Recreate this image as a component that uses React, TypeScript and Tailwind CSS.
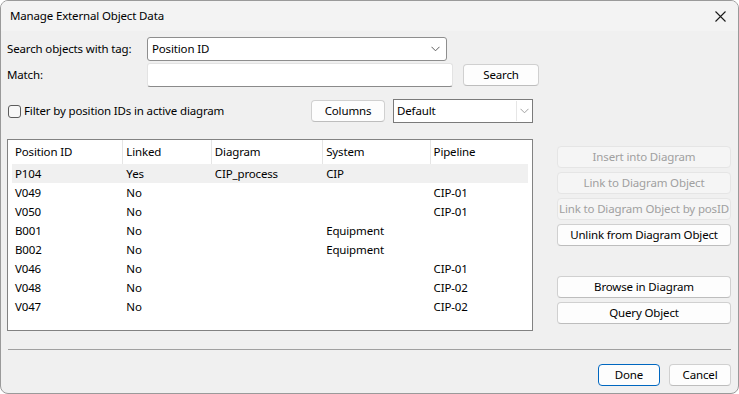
import React from "react";

const rows = [
  ["P104", "Yes", "CIP_process", "CIP", ""],
  ["V049", "No", "", "", "CIP-01"],
  ["V050", "No", "", "", "CIP-01"],
  ["B001", "No", "", "Equipment", ""],
  ["B002", "No", "", "Equipment", ""],
  ["V046", "No", "", "", "CIP-01"],
  ["V048", "No", "", "", "CIP-02"],
  ["V047", "No", "", "", "CIP-02"],
];

const cols = [
  { name: "Position ID", w: "w-[112px]" },
  { name: "Linked", w: "w-[89px]" },
  { name: "Diagram", w: "w-[112px]" },
  { name: "System", w: "w-[108px]" },
  { name: "Pipeline", w: "w-[98px]" },
];

function Chevron({ color = "#5f5f5f" }: { color?: string }) {
  return (
    <svg width="9" height="6" viewBox="0 0 9 6" fill="none">
      <path d="M0.5 0.8 L4.5 4.8 L8.5 0.8" stroke={color} strokeWidth="1" />
    </svg>
  );
}

function Btn({ children, w, disabled, primary }: { children: React.ReactNode; w: string; disabled?: boolean; primary?: boolean }) {
  return (
    <div
      className={`${w} h-[22px] flex items-center justify-center rounded-[4px] border whitespace-nowrap ${
        disabled
          ? "bg-[#f5f5f5] border-[#e5e5e5] text-[#a0a0a0]"
          : primary
          ? "bg-[#fdfdfd] border-[#0067c0] text-black"
          : "bg-[#fdfdfd] border-[#d0d0d0] border-b-[#bdbdbd] text-black"
      }`}
    >
      {children}
    </div>
  );
}

export default function App() {
  return (
    <div
      className="w-[739px] h-[394px] overflow-hidden rounded-[8px] border border-[#9a9a9a] bg-[#f0f0f0] text-[11.5px] tracking-[-0.15px] text-black flex flex-col"
      style={{ fontFamily: '"Noto Sans", "Open Sans", sans-serif' }}
    >
      {/* Title bar */}
      <div className="h-[30px] shrink-0 bg-[#f3f3f3] flex items-center justify-between pl-[9px] pr-[12px]">
        <span className="leading-none">Manage External Object Data</span>
        <svg width="11" height="11" viewBox="0 0 11 11">
          <path d="M0.5 0.5 L10.5 10.5 M10.5 0.5 L0.5 10.5" stroke="#1a1a1a" strokeWidth="1.1" />
        </svg>
      </div>

      {/* Body */}
      <div className="flex-1 flex flex-col pl-[6px] pr-[7px]">
        {/* Row 1 */}
        <div className="flex items-center mt-[6px] h-[24px]">
          <span className="w-[140px]">Search objects with tag:</span>
          <div className="w-[300px] h-[24px] bg-white border border-[#8e8e8e] rounded-[3px] flex items-center justify-between pl-[4px] pr-[6px]">
            <span>Position ID</span>
            <Chevron />
          </div>
        </div>
        {/* Row 2 */}
        <div className="flex items-center mt-[2px] h-[24px]">
          <span className="w-[140px]">Match:</span>
          <div className="w-[306px] h-[24px] bg-white border border-[#e3e3e3] border-b-[#8a8a8a] rounded-[3px]" />
          <div className="ml-[10px]">
            <Btn w="w-[76px]">Search</Btn>
          </div>
        </div>
        {/* Row 3 */}
        <div className="flex items-center mt-[12px] h-[24px]">
          <div className="w-[13px] h-[13px] border border-[#5c5c5c] rounded-[3px] bg-[#f7f7f7] ml-[1px]" />
          <span className="ml-[3px] w-[287px]">Filter by position IDs in active diagram</span>
          <Btn w="w-[74px]">Columns</Btn>
          <div className="ml-[8px] w-[140px] h-[24px] bg-white border border-[#7a7a7a] flex items-center">
            <span className="flex-1 pl-[3px]">Default</span>
            <div className="w-px h-[20px] bg-[#e6e6e6]" />
            <div className="w-[15px] flex justify-center">
              <Chevron color="#a0a0a0" />
            </div>
          </div>
        </div>

        {/* Table + right buttons */}
        <div className="flex mt-[16px]">
          <div className="w-[526px] h-[192px] bg-white border border-[#828282] px-[4px]">
            <div className="flex h-[24px]">
              {cols.map((c, i) => (
                <div
                  key={c.name}
                  className={`${c.w} flex items-center pl-[3px] ${i < cols.length - 1 ? "border-r border-[#e5e5e5]" : ""}`}
                >
                  {c.name}
                </div>
              ))}
            </div>
            {rows.map((r, ri) => (
              <div key={ri} className={`flex h-[19px] ${ri === 0 ? "bg-[#f0f0f0]" : ""}`}>
                {r.map((cell, ci) => (
                  <div key={ci} className={`${cols[ci].w} flex items-center pl-[3px]`}>
                    {cell}
                  </div>
                ))}
              </div>
            ))}
          </div>

          <div className="ml-[24px] flex flex-col pt-[7px]">
            <div className="flex flex-col gap-[4px]">
              <Btn w="w-[174px]" disabled>Insert into Diagram</Btn>
              <Btn w="w-[174px]" disabled>Link to Diagram Object</Btn>
              <Btn w="w-[174px]" disabled>Link to Diagram Object by posID</Btn>
              <Btn w="w-[174px]">Unlink from Diagram Object</Btn>
            </div>
            <div className="flex flex-col gap-[4px] mt-[30px]">
              <Btn w="w-[174px]">Browse in Diagram</Btn>
              <Btn w="w-[174px]">Query Object</Btn>
            </div>
          </div>
        </div>

        {/* Separator */}
        <div className="mt-[18px] h-px bg-[#a0a0a0] ml-[1px]" />

        {/* Footer */}
        <div className="flex justify-end mt-[14px] gap-[9px]">
          <Btn w="w-[62px]" primary>Done</Btn>
          <Btn w="w-[62px]">Cancel</Btn>
        </div>
      </div>
    </div>
  );
}
